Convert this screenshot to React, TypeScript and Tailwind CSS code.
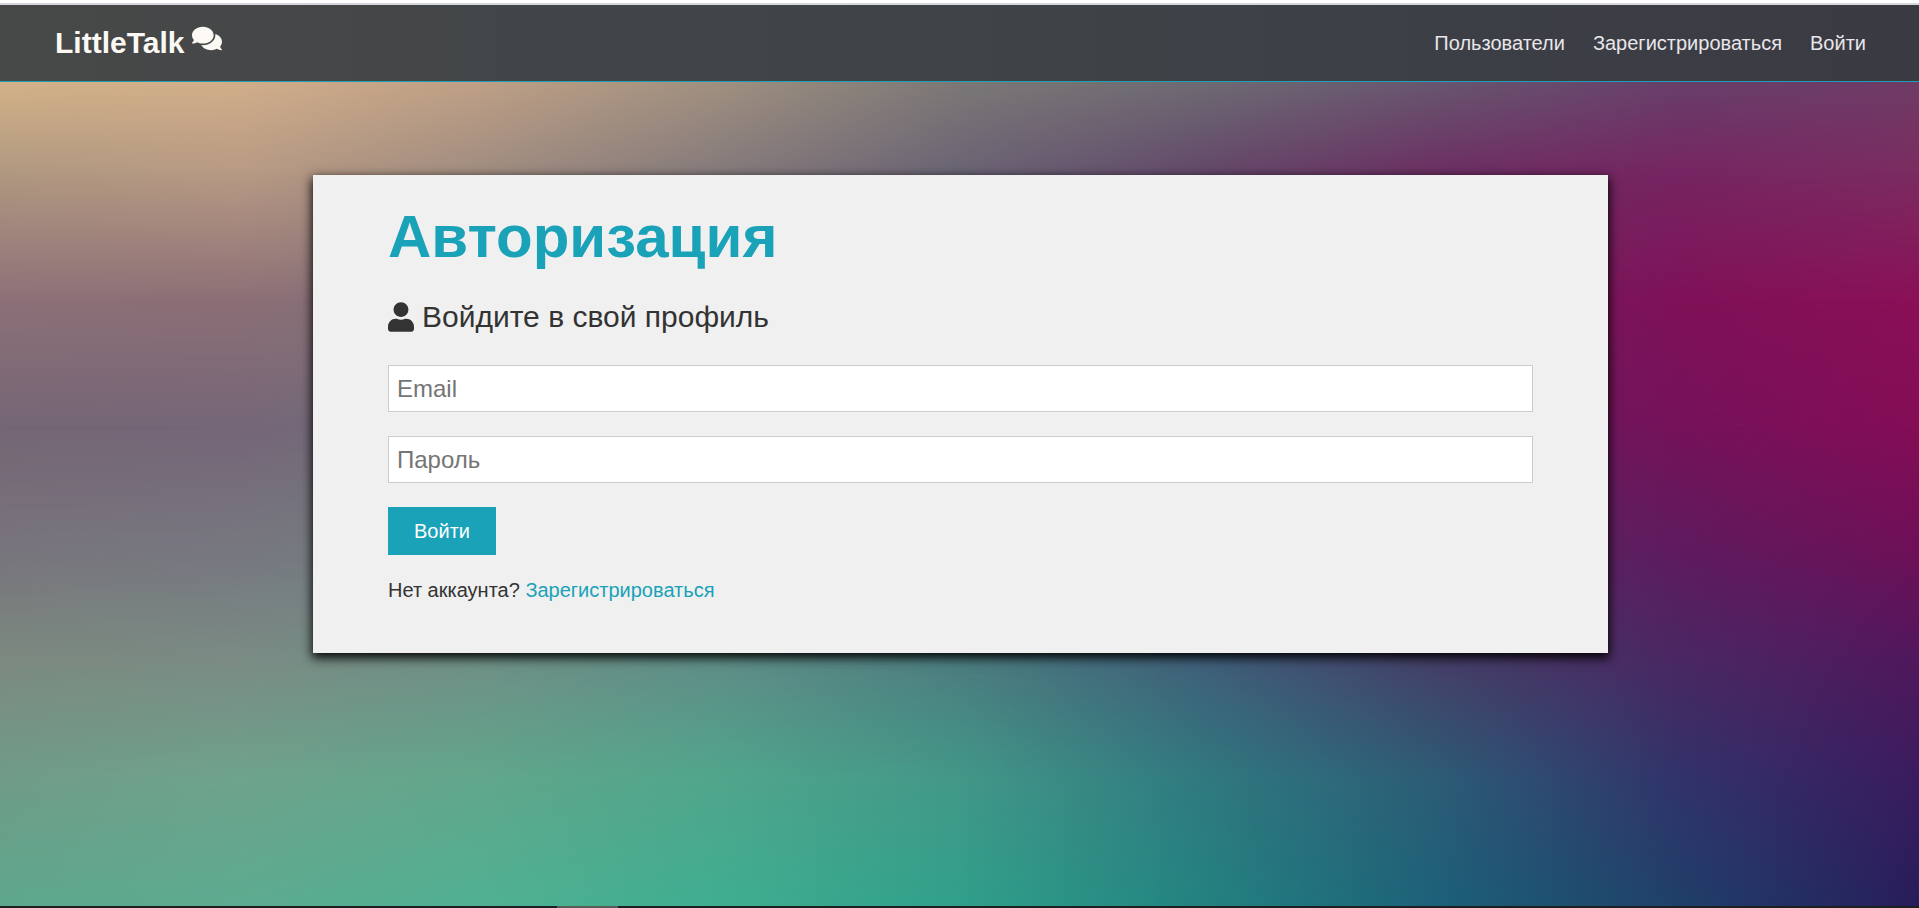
import React from "react";
import { FaComments, FaUser } from "react-icons/fa";

type BackdropRow = { y: number; colors: string[] };

// Colour mesh of the backdrop: each row spreads its colours evenly from left to right.
const backdropRows: BackdropRow[] = [
  { y: 9, colors: ["#d2b288", "#d0ae8a", "#bfa086", "#a09080", "#7c7877", "#6e6b73", "#685670", "#683f6a", "#6f3c66"] },
  { y: 19, colors: ["#b09880", "#b89a84", "#a08c80", "#857a7b", "#6a6474", "#63496a", "#6c2f62", "#762562", "#7b2c60"] },
  { y: 33, colors: ["#8c7078", "#8c6f76", "#7f7078", "#706c78", "#625f78", "#653f6c", "#731f60", "#7f1158", "#8a1058"] },
  { y: 47, colors: ["#756675", "#756678", "#72707a", "#68707c", "#586a7c", "#5a4a70", "#681f60", "#75125a", "#840d56"] },
  { y: 61, colors: ["#78757c", "#777880", "#728080", "#628080", "#507680", "#4c5474", "#552f66", "#5e1b5e", "#6d1058"] },
  { y: 73, colors: ["#7c8a80", "#7a8c84", "#6f9086", "#5f8e87", "#4c7d7f", "#3f6079", "#443f68", "#492862", "#50185d"] },
  { y: 86, colors: ["#709c88", "#6ea38c", "#61a78c", "#50a68c", "#429888", "#307a80", "#2c5c76", "#31336a", "#3a1c5e"] },
  { y: 100, colors: ["#5da78c", "#5cab90", "#50b092", "#3fae90", "#30a08a", "#238380", "#1c6078", "#1f4069", "#271d5a"] },
];

function Backdrop() {
  return (
    <div aria-hidden="true" className="absolute inset-0 -z-10 overflow-hidden">
      {backdropRows.map((row, i) => {
        const mask =
          i === 0 ? undefined : `linear-gradient(to bottom, transparent ${backdropRows[i - 1].y}%, black ${row.y}%)`;
        return (
          <div
            key={row.y}
            className="absolute inset-0"
            style={{
              backgroundImage: `linear-gradient(to right, ${row.colors.join(", ")})`,
              maskImage: mask,
            }}
          />
        );
      })}
    </div>
  );
}

const navLinks = ["Пользователи", "Зарегистрироваться", "Войти"];

function Header() {
  return (
    <header className="flex h-[77px] items-center justify-between border-b border-[#1f9fb5] bg-linear-to-r from-[#474848] via-[#3f4448] to-[#3a3a43] pr-[53px] pb-px pl-[55px]">
      <a href="#" className="flex items-start gap-2 text-3xl font-bold text-[#fcf9f4]">
        LittleTalk
        <FaComments className="h-[27px] w-[30px]" />
      </a>
      <nav>
        <ul className="flex gap-7">
          {navLinks.map((label) => (
            <li key={label}>
              <a href="#" className="text-xl text-[#e9e6ea]">
                {label}
              </a>
            </li>
          ))}
        </ul>
      </nav>
    </header>
  );
}

const inputClass =
  "block h-[47px] w-full border border-[#cccccc] bg-white px-2 text-2xl text-[#333333] placeholder:text-[#757575] outline-none";

function LoginCard() {
  return (
    <section className="mx-auto w-full max-w-[1295px] bg-[#f0f0f0] px-[75px] pt-[26px] pb-[47px] text-[#333333] shadow-[0_4px_10px_1px_rgba(0,0,0,0.95)]">
      <h1 className="text-6xl leading-[72px] font-bold text-[#19a2b8]">Авторизация</h1>
      <p className="mt-[22px] flex items-center gap-2 text-3xl leading-[44px]">
        <FaUser className="h-[30px] w-[26px]" />
        Войдите в свой профиль
      </p>
      <form className="mt-[26px] flex flex-col items-start gap-6" onSubmit={(e) => e.preventDefault()}>
        <input type="email" aria-label="Email" placeholder="Email" className={inputClass} />
        <input type="password" aria-label="Пароль" placeholder="Пароль" className={inputClass} />
        <button type="submit" className="h-12 bg-[#19a2b8] px-[26px] text-xl text-white">
          Войти
        </button>
      </form>
      <p className="mt-[19px] text-xl leading-8">
        Нет аккаунта?{" "}
        <a href="#" className="text-[#19a2b8]">
          Зарегистрироваться
        </a>
      </p>
    </section>
  );
}

export default function App() {
  return (
    <div className="relative isolate flex min-h-screen flex-col font-['Liberation_Sans',Arial,sans-serif]">
      <Backdrop />
      <div className="h-[5px] border-b-2 border-[#d6d6dc] bg-white" />
      <Header />
      <main className="grow pt-[93px] pb-12 pl-0.5">
        <LoginCard />
      </main>
      <div className="flex h-[2px] bg-[#1c2022]">
        <div className="ml-[29%] w-[61px] bg-[#565a58]" />
      </div>
    </div>
  );
}
